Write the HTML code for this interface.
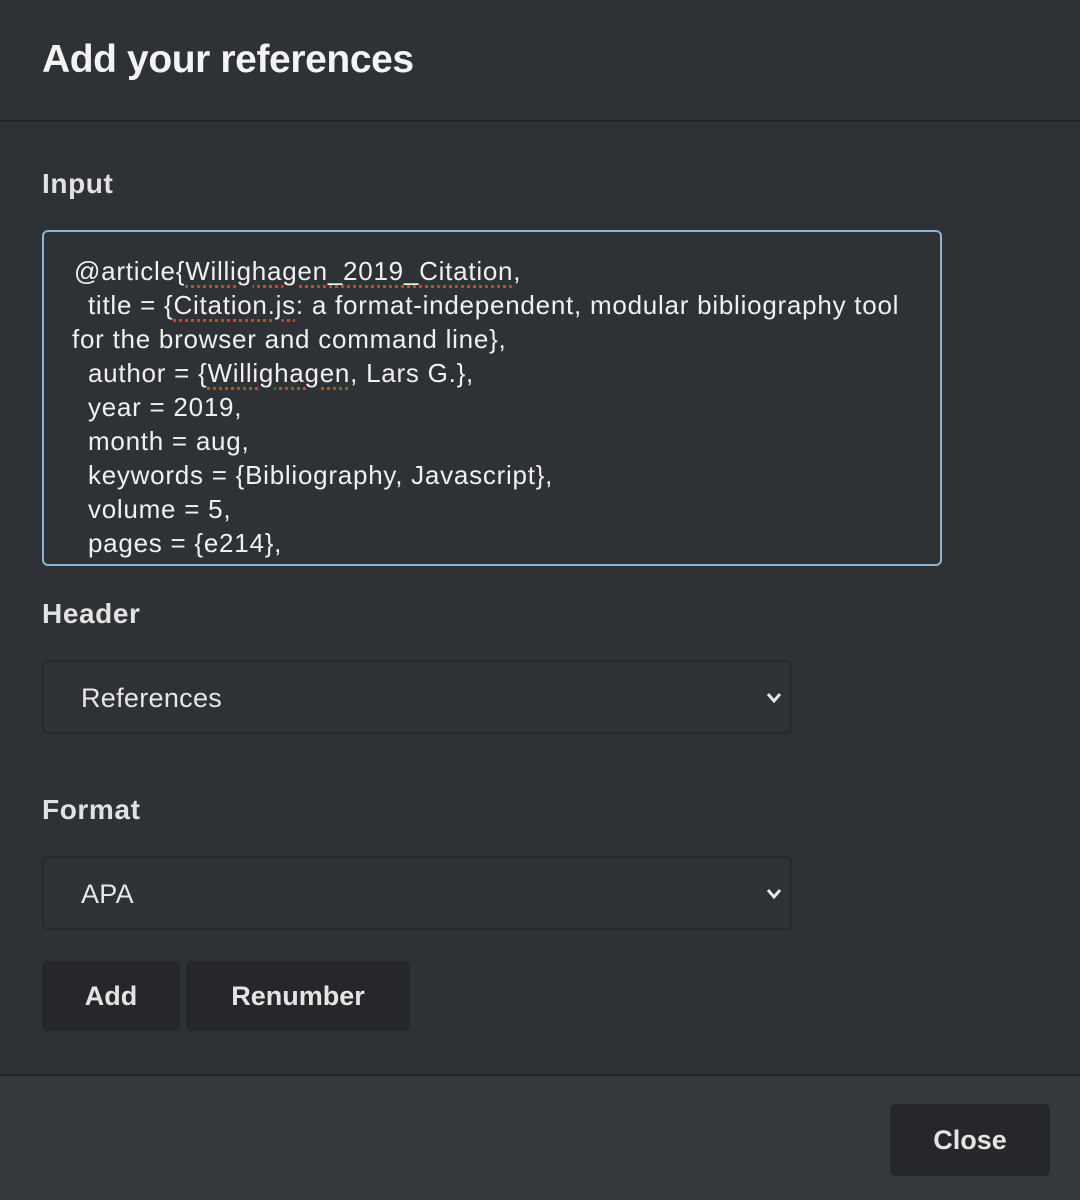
<!DOCTYPE html>
<html><head><style>
*{margin:0;padding:0;box-sizing:border-box}
body{width:1080px;height:1200px;background:#2e3135;font-family:"Liberation Sans",sans-serif;color:#e8e8e8;position:relative;overflow:hidden}
.a{position:absolute}
h1{position:absolute;left:42px;top:38px;font-size:39px;font-weight:bold;color:#f4f4f4;letter-spacing:-0.4px}
.hr{position:absolute;left:0;width:1080px;height:2px;background:#232528}
.lbl{position:absolute;left:42px;font-size:28px;font-weight:bold;color:#e2e2e2;letter-spacing:0.6px}
.ta{position:absolute;left:42px;top:230px;width:900px;height:336px;border:2px solid #8fb3d0;border-radius:6px;overflow:hidden;padding:22px 0 0 28px;font-size:26px;line-height:34px;color:#f0f0f0;white-space:pre;letter-spacing:0.75px}
.sp{text-decoration:underline dotted #d0403a;text-decoration-thickness:3px;text-underline-offset:5px}
.sel{position:absolute;left:42px;width:750px;height:74px;border:2px solid #26282b;border-radius:6px;font-size:27px;padding:21px 0 0 37px;color:#e6e6e6;letter-spacing:0.3px}
.sel svg{position:absolute;right:7px;top:28px}
.btn{position:absolute;background:#25272a;border-radius:6px;font-size:27px;font-weight:bold;color:#e4e4e4;text-align:center;line-height:70px;height:70px}
</style></head><body>
<h1>Add your references</h1>
<div class="hr" style="top:120px"></div>
<div class="lbl" style="top:168px">Input</div>
<div class="ta"><span style="margin-left:2px">@article{<span class="sp">Willighagen_2019_Citation</span>,</span>
  title = {<span class="sp">Citation.js</span>: a format-independent, modular bibliography tool
for the browser and command line},
  author = {<span class="sp">Willighagen</span>, Lars G.},
  year = 2019,
  month = aug,
  keywords = {Bibliography, Javascript},
  volume = 5,
  pages = {e214},</div>
<div class="lbl" style="top:598px">Header</div>
<div class="sel" style="top:660px">References<svg width="18" height="16" viewBox="0 0 18 16"><path d="M3 4l6 7 6-7" stroke="#e6e6e6" stroke-width="3" fill="none"/></svg></div>
<div class="lbl" style="top:794px">Format</div>
<div class="sel" style="top:856px">APA<svg width="18" height="16" viewBox="0 0 18 16"><path d="M3 4l6 7 6-7" stroke="#e6e6e6" stroke-width="3" fill="none"/></svg></div>
<div class="btn" style="left:42px;top:961px;width:138px">Add</div>
<div class="btn" style="left:186px;top:961px;width:224px">Renumber</div>
<div class="a" style="left:0;top:1075px;width:1080px;height:125px;background:#35383d"></div>
<div class="hr" style="top:1074px"></div>
<div class="btn" style="left:890px;top:1104px;width:160px;height:72px;line-height:72px">Close</div>
</body></html>
